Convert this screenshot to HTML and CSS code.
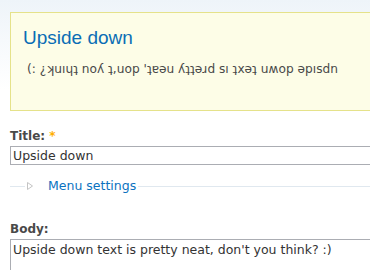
FILE: index.html
```html
<!DOCTYPE html>
<html>
<head>
<meta charset="utf-8">
<link rel="stylesheet" href="styles.css">
</head>
<body>
<div class="page">
  <div class="preview">
    <h2 class="preview-title">Upside down</h2>
    <p class="preview-body">(: ¿ʞuıɥʇ noʎ ʇ,uop 'ʇɐǝu ʎʇʇǝɹd sı ʇxǝʇ uʍop ǝpısdn</p>
  </div>
  <div class="form-item title-item">
    <label class="label">Title: <span class="required">*</span></label>
    <div class="input">Upside down</div>
  </div>
  <div class="fieldset">
    <span class="rule short"></span>
    <svg class="arrow" width="8" height="10" viewBox="0 0 8 10"><path d="M1.5 1.5 L6.5 5 L1.5 8.5 Z" fill="#fff" stroke="#c4c4c4" stroke-width="1"/></svg>
    <a class="legend">Menu settings</a>
    <span class="rule long"></span>
  </div>
  <div class="form-item body-item">
    <label class="label">Body:</label>
    <div class="textarea">Upside down text is pretty neat, don't you think? :)</div>
  </div>
</div>
</body>
</html>
```
FILE: styles.css
```css
html, body {
  margin: 0;
  padding: 0;
}
body {
  width: 370px;
  height: 270px;
  overflow: hidden;
  background: linear-gradient(to bottom, #eef4f9 0px, #f6f9fc 40px, #ffffff 90px);
  font-family: "DejaVu Sans", Verdana, sans-serif;
  font-size: 12px;
  color: #494949;
}
.page {
  padding: 12px 0 0 10px;
  height: 258px;
  display: flex;
  flex-direction: column;
}
.preview {
  border: 1px solid #e5e28a;
  border-right: none;
  background: #fdfde7;
  padding: 13px 0 0 12px;
  height: 84px;
  flex: none;
}
.preview-title {
  margin: 0;
  font-family: "Liberation Sans", Arial, sans-serif;
  font-weight: normal;
  font-size: 19px;
  line-height: 23px;
  color: #0a6db5;
}
.preview-body {
  margin: 12px 0 0 4px;
  font-size: 12.2px;
  line-height: 16px;
  color: #494949;
}
.form-item {
  display: flex;
  flex-direction: column;
}
.title-item {
  margin-top: 17px;
  flex: none;
}
.label {
  font-weight: bold;
  font-size: 12px;
  line-height: 16px;
  color: #494949;
}
.required {
  color: #ffae00;
}
.input {
  margin-top: 2px;
  height: 17px;
  border: 1px solid #abadb3;
  border-right: none;
  background: #fff;
  padding-left: 2px;
  font-size: 12.5px;
  line-height: 17px;
  color: #333;
}
.fieldset {
  display: flex;
  align-items: center;
  margin-top: 11px;
  height: 20px;
  flex: none;
}
.rule {
  height: 1px;
  background: #e0e8ef;
}
.rule.short {
  width: 15px;
  margin-right: 1px;
}
.arrow {
  margin-right: 14px;
}
.rule.long {
  flex: 1;
}
.legend {
  color: #0b72bf;
  font-size: 12.5px;
  line-height: 16px;
  padding-right: 2px;
}
.body-item {
  margin-top: 25px;
  flex: 1;
  min-height: 0;
}
.textarea {
  margin-top: 2px;
  flex: 1;
  border: 1px solid #abadb3;
  border-right: none;
  border-bottom: none;
  background: #fff;
  padding: 1px 2px 0;
  font-size: 12.5px;
  line-height: 17px;
  color: #333;
}
```
